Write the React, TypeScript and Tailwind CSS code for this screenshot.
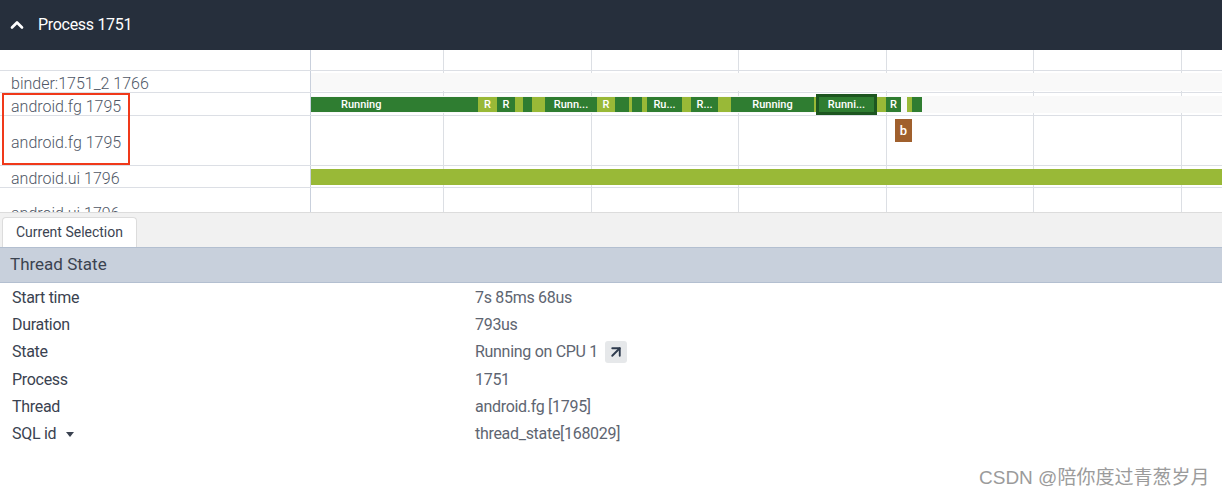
import { ChevronUp, ArrowUpRight } from "lucide-react";

type Seg = { x: number; w: number; c: "d" | "l"; t?: string };

const DARK = "bg-[#2f7d31]";
const LIGHT = "bg-[#99b937]";

// thread state slices for android.fg 1795 (x in px, relative to page)
const fgSegs: Seg[] = [
  { x: 478, w: 19, c: "l", t: "R" },
  { x: 497, w: 18, c: "d", t: "R" },
  { x: 515, w: 8, c: "l" },
  { x: 523, w: 9, c: "d" },
  { x: 532, w: 13, c: "l" },
  { x: 545, w: 52, c: "d", t: "Runn..." },
  { x: 597, w: 18, c: "l", t: "R" },
  { x: 615, w: 14, c: "d" },
  { x: 629, w: 3, c: "l" },
  { x: 632, w: 10, c: "d" },
  { x: 642, w: 5, c: "l" },
  { x: 647, w: 35, c: "d", t: "Ru..." },
  { x: 682, w: 9, c: "l" },
  { x: 691, w: 27, c: "d", t: "R..." },
  { x: 718, w: 13, c: "l" },
  { x: 731, w: 83, c: "d", t: "Running" },
  { x: 814, w: 2, c: "l" },
  { x: 877, w: 9, c: "l" },
  { x: 886, w: 15, c: "d", t: "R" },
  { x: 907, w: 5, c: "l" },
  { x: 912, w: 10, c: "d" },
];

const gridXs = [443, 591, 738, 886, 1033, 1181];

const details = [
  ["Start time", "7s 85ms 68us"],
  ["Duration", "793us"],
  ["State", "Running on CPU 1"],
  ["Process", "1751"],
  ["Thread", "android.fg [1795]"],
  ["SQL id", "thread_state[168029]"],
];

const font = { fontFamily: "Roboto, 'Noto Sans CJK SC', sans-serif" };

const Row = ({ h, label, children }: { h: string; label?: string; children?: React.ReactNode }) => (
  <div className={`flex border-b border-[#dcdfe5] ${h}`}>
    <div className="w-[311px] shrink-0 flex items-center pl-[11px] pt-[5px] text-[16px] font-light text-[#4f5766] overflow-hidden leading-none">
      {label}
    </div>
    <div className="relative flex-1">{children}</div>
  </div>
);

export default function App() {
  return (
    <div className="w-[1222px] h-[496px] bg-white overflow-hidden relative" style={font}>
      {/* process header */}
      <div className="h-[50px] bg-[#262f3c] flex items-center pl-[7px] text-white">
        <ChevronUp className="w-[20px] h-[20px]" strokeWidth={3.2} />
        <span className="ml-[11px] text-[16px] tracking-[-0.3px] pb-[1px]">Process 1751</span>
      </div>

      {/* timeline */}
      <div className="relative h-[162px] overflow-hidden">
        {/* grid lines */}
        <div className="absolute top-0 bottom-0 left-[310px] w-px bg-[#c9d0dc]" />
        {gridXs.map((x) => (
          <div key={x} className="absolute top-0 bottom-0 w-px bg-[#dcdfe4]" style={{ left: x }} />
        ))}

        <div className="relative">
          <Row h="h-[21px]" />
          <Row h="h-[22px]" label="binder:1751_2 1766">
            <div className="absolute left-0 right-0 top-[2px] bottom-[1px] bg-[#f9f9f9]" />
          </Row>
          <Row h="h-[23px]" label="android.fg 1795">
            <div className="absolute left-0 right-0 top-[3px] bottom-[2px] bg-[#f9f9f9]" />
            <div className="absolute left-0 top-[4px] h-[15px] w-[167px] bg-[#2f7d31] flex items-center pl-[30px] text-white text-[11px] font-medium leading-none">
              Running
            </div>
            {fgSegs.map((s, i) => (
              <div
                key={i}
                className={`absolute top-[4px] h-[15px] ${s.c === "d" ? DARK : LIGHT} flex items-center justify-center text-white text-[11px] font-medium leading-none overflow-hidden`}
                style={{ left: s.x - 311, width: s.w }}
              >
                {s.t}
              </div>
            ))}
            <div
              className="absolute top-[1px] h-[21px] bg-[#2f7d31] border-[3px] border-[#1d5620] flex items-center justify-center text-white text-[11px] font-medium leading-none"
              style={{ left: 816 - 311, width: 61 }}
            >
              Runni...
            </div>
          </Row>
          <Row h="h-[50px]" label="android.fg 1795">
            <div
              className="absolute top-[3px] h-[23px] w-[17px] bg-[#a0602d] flex items-center justify-center text-white text-[13px] font-medium"
              style={{ left: 895 - 311 }}
            >
              b
            </div>
          </Row>
          <Row h="h-[22px]" label="android.ui 1796">
            <div className="absolute left-0 right-0 top-[3px] h-[16px] bg-[#99b937]" />
          </Row>
          <div className="h-[24px] flex overflow-hidden">
            <div className="w-[311px] pl-[11px] pt-[18px] text-[16px] font-light text-[#4f5766] leading-none">android.ui 1796</div>
          </div>
        </div>

        {/* highlight box */}
        <div className="absolute left-[2px] top-[43px] w-[128px] h-[72px] border-2 border-[#f0391a]" />
      </div>

      {/* tabs */}
      <div className="h-[35px] bg-[#f1f1f1] border-t border-[#dcdcdc] flex items-end pl-[2px]">
        <div className="h-[30px] w-[135px] bg-white rounded-t-[4px] border border-b-0 border-[#dcdcdc] flex items-center justify-center text-[14px] text-[#3c4452]">
          Current Selection
        </div>
      </div>

      {/* thread state */}
      <div className="h-[36px] bg-[#c8d0dc] border-y border-[#b3bfd0] flex items-center pl-[10px] text-[17px] text-[#3b4350]">
        Thread State
      </div>

      <div className="pt-[1px] text-[16px] tracking-[-0.3px]">
        {details.map(([k, v]) => (
          <div key={k} className="flex h-[27.3px] items-center">
            <div className="w-[475px] pl-[12px] text-[#3a4250] flex items-center">
              {k}
              {k === "SQL id" && (
                <svg className="ml-[10px]" width="8" height="5" viewBox="0 0 8 5">
                  <path d="M0 0 L8 0 L4 5 Z" fill="#3a4250" />
                </svg>
              )}
            </div>
            <div className="text-[#5e6571] flex items-center">
              {v}
              {k === "State" && (
                <span className="ml-[7px] w-[22px] h-[22px] rounded-[3px] bg-[#e6e8ea] flex items-center justify-center">
                  <ArrowUpRight className="w-[18px] h-[18px] text-[#2f3b4e]" strokeWidth={2.5} />
                </span>
              )}
            </div>
          </div>
        ))}
      </div>

      {/* watermark */}
      <div
        className="absolute left-[979px] top-[464px] text-[19px] text-[#9b9b9b]"
        style={{ fontFamily: "'Liberation Sans', 'Noto Sans CJK SC', sans-serif" }}
      >
        CSDN @陪你度过青葱岁月
      </div>
    </div>
  );
}
